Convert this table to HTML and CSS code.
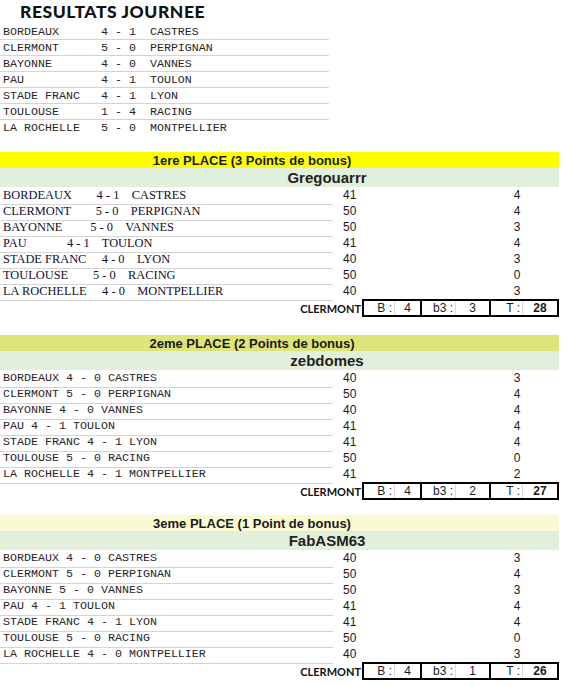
FILE: index.html
```html
<!DOCTYPE html>
<html lang="fr">
<head>
<meta charset="utf-8">
<title>Resultats journee</title>
<link rel="stylesheet" href="styles.css">
</head>
<body>
<div class="page">
  <h1 class="title">RESULTATS JOURNEE</h1>
  <div class="results">
    <div class="res-row">BORDEAUX      4 - 1  CASTRES</div>
    <div class="res-row">CLERMONT      5 - 0  PERPIGNAN</div>
    <div class="res-row">BAYONNE       4 - 0  VANNES</div>
    <div class="res-row">PAU           4 - 1  TOULON</div>
    <div class="res-row">STADE FRANC   4 - 1  LYON</div>
    <div class="res-row">TOULOUSE      1 - 4  RACING</div>
    <div class="res-row">LA ROCHELLE   5 - 0  MONTPELLIER</div>
  </div>

  <section class="place place-1">
    <div class="place-head">1ere PLACE (3 Points de bonus)</div>
    <div class="player">Gregouarrr</div>
    <div class="bet-row"><span class="match serif">BORDEAUX        4 - 1    CASTRES</span><span class="n1">41</span><span class="n2">4</span></div>
    <div class="bet-row"><span class="match serif">CLERMONT        5 - 0    PERPIGNAN</span><span class="n1">50</span><span class="n2">4</span></div>
    <div class="bet-row"><span class="match serif">BAYONNE         5 - 0    VANNES</span><span class="n1">50</span><span class="n2">3</span></div>
    <div class="bet-row"><span class="match serif">PAU             4 - 1    TOULON</span><span class="n1">41</span><span class="n2">4</span></div>
    <div class="bet-row"><span class="match serif">STADE FRANC     4 - 0    LYON</span><span class="n1">40</span><span class="n2">3</span></div>
    <div class="bet-row"><span class="match serif">TOULOUSE        5 - 0    RACING</span><span class="n1">50</span><span class="n2">0</span></div>
    <div class="bet-row"><span class="match serif">LA ROCHELLE     4 - 0    MONTPELLIER</span><span class="n1">40</span><span class="n2">3</span></div>
    <div class="totals">
      <span class="team">CLERMONT</span>
      <div class="box">
        <div class="cell c1"><span class="lbl">B :</span><span class="val">4</span></div>
        <div class="cell c2"><span class="lbl">b3 :</span><span class="val">3</span></div>
        <div class="cell c3"><span class="lbl">T :</span><span class="val total">28</span></div>
      </div>
    </div>
  </section>

  <section class="place place-2">
    <div class="place-head">2eme PLACE (2 Points de bonus)</div>
    <div class="player">zebdomes</div>
    <div class="bet-row"><span class="match mono">BORDEAUX 4 - 0 CASTRES</span><span class="n1">40</span><span class="n2">3</span></div>
    <div class="bet-row"><span class="match mono">CLERMONT 5 - 0 PERPIGNAN</span><span class="n1">50</span><span class="n2">4</span></div>
    <div class="bet-row"><span class="match mono">BAYONNE 4 - 0 VANNES</span><span class="n1">40</span><span class="n2">4</span></div>
    <div class="bet-row"><span class="match mono">PAU 4 - 1 TOULON</span><span class="n1">41</span><span class="n2">4</span></div>
    <div class="bet-row"><span class="match mono">STADE FRANC 4 - 1 LYON</span><span class="n1">41</span><span class="n2">4</span></div>
    <div class="bet-row"><span class="match mono">TOULOUSE 5 - 0 RACING</span><span class="n1">50</span><span class="n2">0</span></div>
    <div class="bet-row"><span class="match mono">LA ROCHELLE 4 - 1 MONTPELLIER</span><span class="n1">41</span><span class="n2">2</span></div>
    <div class="totals">
      <span class="team">CLERMONT</span>
      <div class="box">
        <div class="cell c1"><span class="lbl">B :</span><span class="val">4</span></div>
        <div class="cell c2"><span class="lbl">b3 :</span><span class="val">2</span></div>
        <div class="cell c3"><span class="lbl">T :</span><span class="val total">27</span></div>
      </div>
    </div>
  </section>

  <section class="place place-3">
    <div class="place-head">3eme PLACE (1 Point de bonus)</div>
    <div class="player">FabASM63</div>
    <div class="bet-row"><span class="match mono">BORDEAUX 4 - 0 CASTRES</span><span class="n1">40</span><span class="n2">3</span></div>
    <div class="bet-row"><span class="match mono">CLERMONT 5 - 0 PERPIGNAN</span><span class="n1">50</span><span class="n2">4</span></div>
    <div class="bet-row"><span class="match mono">BAYONNE 5 - 0 VANNES</span><span class="n1">50</span><span class="n2">3</span></div>
    <div class="bet-row"><span class="match mono">PAU 4 - 1 TOULON</span><span class="n1">41</span><span class="n2">4</span></div>
    <div class="bet-row"><span class="match mono">STADE FRANC 4 - 1 LYON</span><span class="n1">41</span><span class="n2">4</span></div>
    <div class="bet-row"><span class="match mono">TOULOUSE 5 - 0 RACING</span><span class="n1">50</span><span class="n2">0</span></div>
    <div class="bet-row"><span class="match mono">LA ROCHELLE 4 - 0 MONTPELLIER</span><span class="n1">40</span><span class="n2">3</span></div>
    <div class="totals">
      <span class="team">CLERMONT</span>
      <div class="box">
        <div class="cell c1"><span class="lbl">B :</span><span class="val">4</span></div>
        <div class="cell c2"><span class="lbl">b3 :</span><span class="val">1</span></div>
        <div class="cell c3"><span class="lbl">T :</span><span class="val total">26</span></div>
      </div>
    </div>
  </section>
</div>
</body>
</html>
```

FILE: styles.css
```css
* { box-sizing: border-box; }

body {
  margin: 0;
  background: #fff;
  color: #1a1a1a;
  font-family: "Liberation Sans", Arial, sans-serif;
}

.page {
  width: 559px;
}

.title {
  margin: 0;
  height: 24px;
  padding-left: 20px;
  font-family: Lato, "Open Sans", sans-serif;
  font-weight: 900;
  font-size: 17.5px;
  letter-spacing: 0.55px;
  line-height: 23px;
  color: #111;
}

.results {
  width: 329px;
}

.res-row {
  height: 16px;
  padding-left: 3px;
  font-family: "Liberation Mono", "Courier New", monospace;
  font-size: 11.67px;
  line-height: 17px;
  white-space: pre;
  color: #2a2424;
  border-bottom: 1px solid #d4d4d4;
}

.res-row:last-child {
  border-bottom: none;
}

.place-1 { margin-top: 16px; }
.place-2 { margin-top: 18px; }
.place-3 { margin-top: 15px; }

.place-head {
  height: 16px;
  padding-right: 55px;
  text-align: center;
  font-weight: 700;
  font-size: 13px;
  line-height: 17px;
  color: #1a1a1a;
}

.place-1 .place-head { background: #ffff00; }
.place-2 .place-head { background: #dde47a; }
.place-3 .place-head { background: #fafad2; }

.player {
  height: 19px;
  padding-left: 95px;
  background: #e2efda;
  text-align: center;
  font-weight: 700;
  font-size: 15px;
  line-height: 20px;
  color: #222;
}

.bet-row {
  display: grid;
  grid-template-columns: 333px 144px 80px;
  height: 16px;
}

.match {
  padding-left: 3px;
  white-space: pre;
  border-bottom: 1px solid #d4d4d4;
  line-height: 17px;
  color: #1a1a1a;
}

.serif {
  font-family: "Liberation Serif", "Times New Roman", serif;
  font-size: 12.4px;
  color: #101030;
}

.mono {
  font-family: "Liberation Mono", "Courier New", monospace;
  font-size: 11.67px;
  color: #2a2424;
}

.n1 {
  padding-left: 10px;
  font-size: 12px;
  line-height: 17px;
}

.n2 {
  text-align: center;
  font-size: 12px;
  line-height: 17px;
}

.totals {
  display: flex;
  justify-content: flex-end;
  align-items: center;
  height: 18px;
}

.team {
  margin-right: 1px;
  font-family: Lato, "Open Sans", sans-serif;
  font-weight: 700;
  font-size: 11px;
  color: #111;
}

.box {
  display: flex;
  height: 18px;
  border: 2px solid #000;
  font-size: 12px;
  line-height: 14px;
}

.cell {
  display: flex;
}

.cell + .cell {
  border-left: 2px solid #000;
}

.lbl {
  padding-right: 2px;
  text-align: right;
  border-right: 1px solid #dcdcdc;
}

.val {
  text-align: center;
}

.c1 .lbl { width: 31px; }
.c1 .val { width: 25px; }
.c2 .lbl { width: 34px; }
.c2 .val { width: 33px; }
.c3 .lbl { width: 32px; }
.c3 .val { width: 34px; }

.total {
  font-weight: 700;
}
```
